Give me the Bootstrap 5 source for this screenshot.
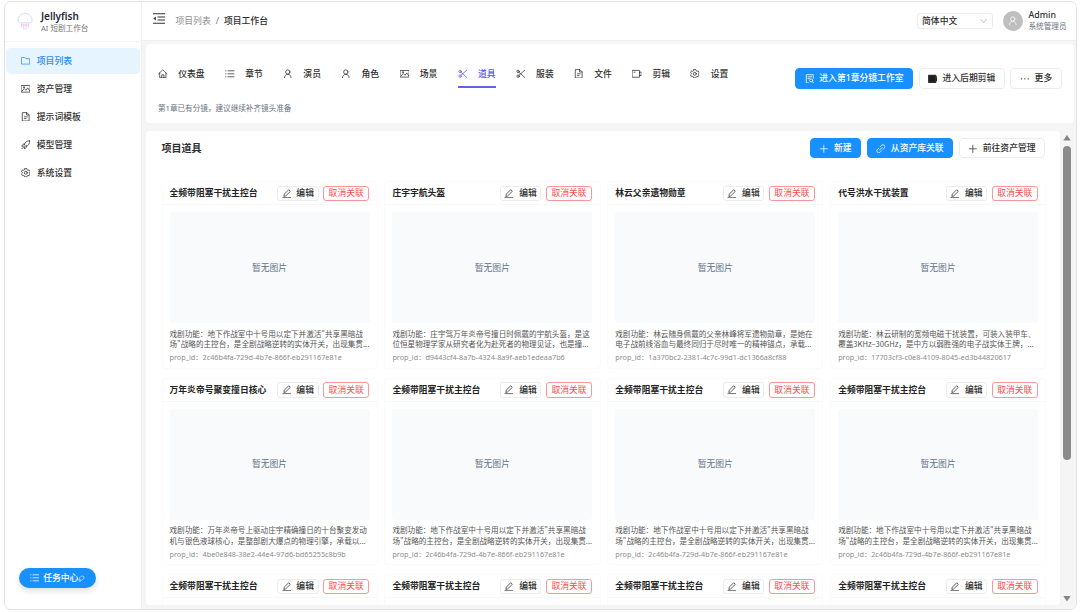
<!DOCTYPE html>
<html lang="zh-CN">
<head>
<meta charset="utf-8">
<meta name="viewport" content="width=device-width, initial-scale=1">
<title>Jellyfish AI 短剧工作台</title>
<link href="https://cdn.jsdelivr.net/npm/bootstrap@5.3.0/dist/css/bootstrap.min.css" rel="stylesheet">
<style>
body{width:1080px;height:612px;overflow:hidden;background:#fefefe;font-family:"Noto Sans","Noto Sans CJK SC",sans-serif;font-size:8.8px;line-height:14px;color:#2e2e2e;padding:1px 3px 2px 4px}
.app-frame{border:1px solid #e3e3e3;border-radius:7px;overflow:hidden;background:#fff;height:609px}
.ico{width:9.6px;height:9.6px;flex:none;fill:none;stroke:currentColor;stroke-width:1.25;stroke-linejoin:round;stroke-linecap:round}
.ico.tiny{stroke-width:.8}
.side{width:136px;flex:none;position:relative}
.brand{height:39.5px;padding:1px 0 0 12px;gap:8px;border-bottom:1px solid #f5f5f5}
.brand-name{font-size:10px;font-weight:600;line-height:13px;color:#1f2937}
.brand-sub{font-size:7.6px;line-height:11px;color:#777}
.side .menu{padding:6.5px 0 0 1px}
.side .menu a{height:25.5px;margin-bottom:2.45px;border-radius:5px;padding-left:14.5px;gap:6.7px;color:#2e2e2e;text-decoration:none;font-weight:500;width:134px}
.side .menu a.active{background:#e6f4ff;color:#2a8bfa}
.task-btn{position:absolute;left:14px;top:566px;width:77px;height:20px;background:#1890ff;color:#fff;border-radius:10px;box-shadow:0 3px 6px rgba(0,0,0,.13);font-weight:500}
.main-area{background:#f5f5f5;border-left:1px solid #f1f1f1;min-width:0}
.topbar{height:39px;background:#fff;border-bottom:1px solid #efefef;padding:0 9.5px 1px 10.5px}
.crumb{font-size:8.8px;margin-left:11px}
.crumb .here{font-weight:500}
.lang-select{width:76px;height:16px;border:1px solid #ececec;border-radius:3px;padding:0 5px 0 4.5px;margin-right:10px;font-weight:500}
.avatar{width:20px;height:20px;border-radius:50%;background:#bfbfbf;color:#fff;margin-right:6px}
.user-name{font-size:8.8px;line-height:12px;font-weight:500}
.user-role{font-size:7.6px;line-height:11px;color:#6b7280}
.panel{background:#fff;border-radius:4px}
.tabs-panel{height:79.5px;margin:2.5px 2px 0 4px;padding:0 12px}
.tab-row{gap:20.4px;height:29.5px;margin-top:15px}
.tab-row a{gap:10.6px;color:#2e2e2e;text-decoration:none;font-weight:500;height:29.5px;padding-top:2.5px;border-bottom:2px solid transparent}
.tab-row a.active{color:#5856e6;border-color:#6462e8}
.hint{font-size:7.6px;line-height:12px;color:#6b7280;margin-top:14px}
.abtn{height:20.6px;border-radius:4px;border:1px solid #ececec;background:#fff;color:#2e2e2e;font-size:8.8px;line-height:1;font-weight:500;padding:.8px 0 0;display:flex;align-items:center;justify-content:center;gap:5.2px;white-space:nowrap}
.abtn.blue{background:#1890ff;border-color:#1890ff;color:#fff}
.abtn.small-h{height:15.6px;border-radius:3px}
.abtn.red{color:#ff4d4f;border-color:#ff9597;font-weight:400}
.list-panel{width:914px;height:474px;margin:7.5px 0 0 4px;overflow:hidden;padding:0 15px 0 15.5px}
.list-head{height:35px}
.list-head h1{font-size:10px;font-weight:600;margin:0;line-height:16px}
.prop-grid{display:grid;grid-template-columns:repeat(4,216.2px);gap:9px 6.7px;padding-top:15.8px}
.prop{height:187.5px;border:1px solid #fafafa;border-radius:4px}
.prop-head{height:23px;padding:0 7.5px 0 7px;border-bottom:1px solid #f8f8f8}
.prop-title{font-weight:700;color:#242424;white-space:nowrap;width:107.5px}
.prop-body{padding:7px 7px 0}
.no-pic{height:111px;width:200px;background:#f8fafc;color:#64748b;border-radius:3px}
.desc{font-family:"Noto Sans CJK SC",sans-serif;font-size:7.6px;line-height:10.2px;color:#555;margin-top:5.5px;white-space:nowrap}
.pid{font-size:7.27px;line-height:12px;color:#8c8c8c;margin-top:2px;white-space:nowrap}
.scroll-rail{width:12px;margin:7.5px 0 0 .8px;height:474px;color:#858585}
.scroll-thumb{width:7.5px;height:314px;border-radius:4px;background:#8b8b8b}
</style>
</head>
<body>
<svg class="d-none">
<symbol id="i-folder" viewBox="0 0 16 16"><path d="M1.500 2.500h4.700l1.800 2h6.500v9h-13z"/></symbol>
<symbol id="i-pic" viewBox="0 0 16 16"><path d="M.8 2.500h14.400v11H.8zM2 11.500l3.300-4 3 3 3-4 3 4.500"/><circle cx="4.800" cy="5.300" r=".8"/></symbol>
<symbol id="i-file" viewBox="0 0 16 16"><path d="M2.800 1h6.900l3.800 3.800V15H2.800zM9.300 1v4h4M5.500 8h5M5.500 11h3"/></symbol>
<symbol id="i-rocket" viewBox="0 0 16 16"><path d="M14.500 1.500C10 1 6.500 3.500 5.500 8l2.500 2.500C12.500 9.500 15 6 14.500 1.500zM6 6.500C3.500 6.500 2 8 1.500 10.500l3-.5M9.500 10c0 2.500-1.500 4-4 4.500l.5-3M4.500 11.500l-3 3"/></symbol>
<symbol id="i-gear" viewBox="0 0 16 16"><path d="M6.300 1h3.400l.5 2 1.300.8 2-.6 1.700 3L13.700 7.700v.8l1.500 1.400-1.700 3-2-.6-1.300.8-.5 1.900H6.300l-.5-1.900-1.300-.8-2 .6-1.700-3 1.500-1.400v-.8L.8 6.200l1.700-3 2 .6L5.800 3z"/><circle cx="8" cy="8" r="2.500"/></symbol>
<symbol id="i-home" viewBox="0 0 16 16"><path d="M.8 8.300L8 1.300l7.200 7M2.800 6.800V14.500h10.400V6.800M6.200 14.500V9.700h3.600v4.800"/></symbol>
<symbol id="i-list" viewBox="0 0 16 16"><path d="M5 3h10.500M5 8h10.500M5 13h10.500M1 3h.6M1 8h.6M1 13h.6"/></symbol>
<symbol id="i-user" viewBox="0 0 16 16"><circle cx="8" cy="5" r="3.600"/><path d="M2.300 15c.2-3.500 2.500-6.200 5.700-6.200s5.500 2.700 5.700 6.200"/></symbol>
<symbol id="i-cut" viewBox="0 0 16 16"><path d="M14.500 2L5 10.500M14.500 14L5 5.500"/><circle cx="3.500" cy="4" r="2"/><circle cx="3.500" cy="12" r="2"/></symbol>
<symbol id="i-video" viewBox="0 0 16 16"><path d="M.8 2.300h11.700v11.400H.8zM12.500 5.800l2.800-1v6.400l-2.800-1M3 5.300h2"/></symbol>
<symbol id="i-edit" viewBox="0 0 16 16"><path d="M3.200 11.800l.7-3.300L11.200 1.200l2.700 2.700-7.300 7.200zM1.500 14.500h13"/></symbol>
<symbol id="i-link" viewBox="0 0 16 16"><path d="M7 4.500L9.500 2a3.200 3.200 0 0 1 4.500 4.500L11.500 9M9 11.500L6.500 14A3.200 3.200 0 0 1 2 9.500L4.500 7M6 10l4-4"/></symbol>
<symbol id="i-plus" viewBox="0 0 16 16"><path d="M8 2v12M2 8h12"/></symbol>
</svg>
<div class="app-frame d-flex">
  <aside class="side">
    <div class="brand d-flex align-items-center">
      <svg width="16" height="20" viewBox="0 0 16 20" fill="none" stroke-width=".7"><path d="M2 10.500C.3 9.500.8 6 2.500 4 5.500.5 10.500.5 13.500 4c1.700 2 2.200 5.500.5 6.500q-1.500 1.200-3 0-1.500 1.200-3 0-1.500 1.200-3 0-1.500 1.200-3 0z" stroke="#c3cdfa"/><path d="M4.500 11.500v4M6.800 11.500v6M9.200 11.500v6M11.500 11.500v4M4.500 13h7" stroke="#eeb5f2"/></svg>
      <div><div class="brand-name">Jellyfish</div><div class="brand-sub">AI 短剧工作台</div></div>
    </div>
    <nav class="menu">
      <a href="#" class="active d-flex align-items-center"><svg class="ico"><use href="#i-folder"/></svg>项目列表</a>
      <a href="#" class="d-flex align-items-center"><svg class="ico"><use href="#i-pic"/></svg>资产管理</a>
      <a href="#" class="d-flex align-items-center"><svg class="ico"><use href="#i-file"/></svg>提示词模板</a>
      <a href="#" class="d-flex align-items-center"><svg class="ico"><use href="#i-rocket"/></svg>模型管理</a>
      <a href="#" class="d-flex align-items-center"><svg class="ico"><use href="#i-gear"/></svg>系统设置</a>
    </nav>
    <div class="task-btn d-flex align-items-center justify-content-center"><svg class="ico me-1"><use href="#i-list"/></svg>任务中心<svg width="7" height="7" viewBox="0 0 16 16" fill="none" stroke="#fff" stroke-width="1.200"><path d="M3 6l6-4 5 2-1 5-5 3-4-1zM3 11l-1 3 3 1 1-3"/></svg></div>
  </aside>
  <div class="main-area flex-grow-1">
    <header class="topbar d-flex align-items-center">
      <svg class="mb-1" width="12" height="11" viewBox="0 0 12 11" stroke="#333" stroke-width="1.100" fill="none"><path d="M0 .8h12M4.500 4h7.500M4.500 7h7.500M0 10.200h12"/><path d="M2.800 3.500v4L.3 5.500z" fill="#333" stroke="none"/></svg>
      <div class="crumb d-flex"><span style="color:#8c8c8c">项目列表</span><span class="text-secondary" style="margin:0 5px">/</span><span class="here">项目工作台</span></div>
      <div class="lang-select d-flex align-items-center justify-content-between ms-auto">简体中文<svg width="7" height="6" viewBox="0 0 7 6" fill="none" stroke="#bbb" stroke-width=".8"><path d="M.5 1l3 4 3-4"/></svg></div>
      <div class="avatar d-flex align-items-center justify-content-center"><svg class="ico"><use href="#i-user"/></svg></div>
      <div><div class="user-name">Admin</div><div class="user-role">系统管理员</div></div>
    </header>
    <section class="panel tabs-panel d-flex justify-content-between">
      <div>
        <nav class="tab-row d-flex">
          <a href="#" class="d-flex align-items-center"><svg class="ico"><use href="#i-home"/></svg>仪表盘</a>
          <a href="#" class="d-flex align-items-center"><svg class="ico"><use href="#i-list"/></svg>章节</a>
          <a href="#" class="d-flex align-items-center"><svg class="ico"><use href="#i-user"/></svg>演员</a>
          <a href="#" class="d-flex align-items-center"><svg class="ico"><use href="#i-user"/></svg>角色</a>
          <a href="#" class="d-flex align-items-center"><svg class="ico"><use href="#i-pic"/></svg>场景</a>
          <a href="#" class="active d-flex align-items-center"><svg class="ico"><use href="#i-cut"/></svg>道具</a>
          <a href="#" class="d-flex align-items-center"><svg class="ico"><use href="#i-cut"/></svg>服装</a>
          <a href="#" class="d-flex align-items-center"><svg class="ico"><use href="#i-file"/></svg>文件</a>
          <a href="#" class="d-flex align-items-center"><svg class="ico"><use href="#i-video"/></svg>剪辑</a>
          <a href="#" class="d-flex align-items-center"><svg class="ico"><use href="#i-gear"/></svg>设置</a>
        </nav>
        <div class="hint">第1章已有分镜，建议继续补齐镜头准备</div>
      </div>
      <div class="d-flex" style="gap:5.500px;padding-top:24.500px">
        <button class="abtn blue" style="width:118px"><svg class="ico tiny"><path d="M4 9H1.300V.7h6.900v3.600M3 2.800h3.500M3 4.600h1.500"/><circle cx="6.200" cy="6.400" r="1.500"/><path d="M7.300 7.500l1.300 1.500"/></svg>进入第1章分镜工作室</button>
        <button class="abtn" style="width:86px"><svg class="ico"><path d="M.7 1.300h7v7h-7zM7.700 3.500l1.200-.5v3.600l-1.200-.5" fill="#1f1f1f"/></svg>进入后期剪辑</button>
        <button class="abtn" style="width:52px"><svg class="ico"><path d="M1.500 4.800h.1M4.800 4.800h.1M8.100 4.800h.1"/></svg>更多</button>
      </div>
    </section>
    <div class="d-flex">
      <section class="panel list-panel">
        <div class="list-head d-flex align-items-center">
          <h1>项目道具</h1>
          <div class="d-flex ms-auto" style="gap:5.400px">
            <button class="abtn blue" style="width:51.500px"><svg class="ico"><use href="#i-plus"/></svg>新建</button>
            <button class="abtn blue" style="width:86.500px"><svg class="ico"><use href="#i-link"/></svg>从资产库关联</button>
            <button class="abtn" style="width:86.500px"><svg class="ico"><use href="#i-plus"/></svg>前往资产管理</button>
          </div>
        </div>
        <div class="prop-grid" id="props"></div>
      </section>
      <div class="scroll-rail d-flex flex-column align-items-center">
        <svg width="8" height="6" viewBox="0 0 8 6" style="margin:4px 0 5px;flex:none"><path d="M4 0l3.700 5.500H.3z" fill="currentColor"/></svg>
        <div class="scroll-thumb"></div>
        <svg class="mt-auto" width="8" height="6" viewBox="0 0 8 6" style="margin-bottom:3px;flex:none"><path d="M4 5.500L7.700 0H.3z" fill="currentColor"/></svg>
      </div>
    </div>
  </div>
</div>
<script>
const common = ['全频带阻塞干扰主控台','戏剧功能：地下作战室中十号用以定下并激活"共享黑暗战','场"战略的主控台，是全剧战略逆转的实体开关，出现集贯...','2c46b4fa-729d-4b7e-866f-eb291167e81e'];
// Cards in the last visible row show only their header above the fold.
const headerOnly = [common[0]];
const items = [
  common,
  ['庄宇宇航头盔','戏剧功能：庄宇驾万年炎帝号撞日时佩戴的宇航头盔，是这','位恒星物理学家从研究者化为赴死者的物理见证，也是撞...','d9443cf4-8a7b-4324-8a9f-aeb1edeaa7b6'],
  ['林云父亲遗物勋章','戏剧功能：林云随身佩戴的父亲林峰将军遗物勋章，是她在','电子战前线浴血与最终同归于尽时唯一的精神锚点，承载...','1a370bc2-2381-4c7c-99d1-dc1366a8cf88'],
  ['代号洪水干扰装置','戏剧功能：林云研制的宽频电磁干扰装置，可装入装甲车、','覆盖3KHz–30GHz，是中方以弱胜强的电子战实体王牌，...','17703cf3-c0e8-4109-8045-ed3b44820617'],
  ['万年炎帝号聚变撞日核心','戏剧功能：万年炎帝号上驱动庄宇精确撞日的十台聚变发动','机与银色液球核心，是整部剧大爆点的物理引擎，承载以...','4be0e848-38e2-44e4-97d6-bd65255c8b9b'],
  common, common, common, headerOnly, headerOnly, headerOnly, headerOnly
];
document.getElementById('props').innerHTML = items.map(([t, a, b, id]) => `
<article class="prop">
  <div class="prop-head d-flex align-items-center">
    <div class="prop-title">${t}</div>
    <button class="abtn small-h" style="width:41.500px"><svg class="ico"><use href="#i-edit"/></svg>编辑</button>
    <button class="abtn small-h red ms-auto" style="width:46px">取消关联</button>
  </div>
  ${id ? `<div class="prop-body">
    <div class="no-pic d-flex align-items-center justify-content-center">暂无图片</div>
    <div class="desc">${a}<br>${b}</div>
    <div class="pid">prop_id：${id}</div>
  </div>` : ''}
</article>`).join('');
</script>
<script src="https://cdn.jsdelivr.net/npm/bootstrap@5.3.0/dist/js/bootstrap.bundle.min.js"></script>
</body>
</html>
